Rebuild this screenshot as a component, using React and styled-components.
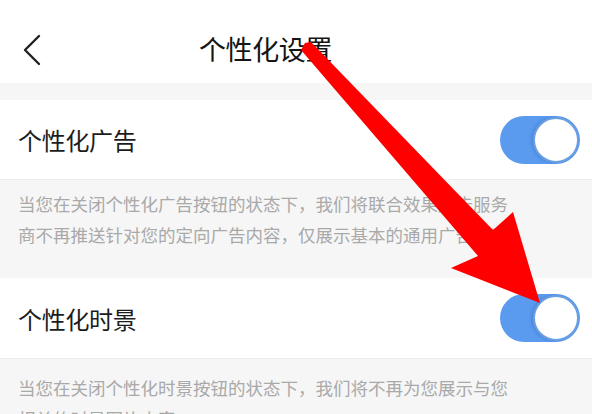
import React from 'react';
import styled, { createGlobalStyle } from 'styled-components';

const GlobalStyle = createGlobalStyle`
  html, body {
    margin: 0;
    padding: 0;
    background: #ffffff;
  }
  body {
    font-family: "Noto Sans CJK SC", "Noto Sans", sans-serif;
  }
`;

/** Page frame */
const Page = styled.div`
  position: relative;
  width: 592px;
  height: 414px;
  overflow: hidden;
  background: #f6f6f6;
`;

/** Header bar with back chevron and title */
const Header = styled.header`
  height: 83px;
  box-sizing: border-box;
  background: #ffffff;
  display: grid;
  grid-template-columns: 176px auto;
  align-items: center;
  padding: 16px 0 0 23px;
  margin-bottom: 17px;
`;

const BackIcon = styled.svg`
  width: 18px;
  height: 32px;
  display: block;
`;

const Title = styled.h1`
  margin: 0;
  font-size: 27px;
  font-weight: 400;
  color: #151515;
  letter-spacing: -0.4px;
  line-height: 1;
  padding-bottom: 2px;
`;

/** One setting row: label + switch */
const Row = styled.div`
  height: ${({ h }) => h}px;
  background: #ffffff;
  display: flex;
  align-items: center;
  justify-content: space-between;
  padding: 0 12px 0 18px;
`;

const Label = styled.span`
  font-size: 24px;
  color: #1c1c1c;
  letter-spacing: -0.3px;
`;

const Track = styled.div`
  width: 80px;
  height: 48px;
  border-radius: 24px;
  background: #5a9bf0;
  display: flex;
  align-items: center;
  justify-content: ${({ on }) => (on ? 'flex-end' : 'flex-start')};
  padding: 0 1px;
  box-sizing: border-box;
`;

const Knob = styled.div`
  width: 46px;
  height: 46px;
  border-radius: 50%;
  background: #ffffff;
  border: 2px solid #6a9fe2;
  box-sizing: border-box;
  box-shadow: -2px 0 3px rgba(40, 80, 140, 0.25);
`;

/** Grey explanation under each row */
const Description = styled.p`
  margin: 0;
  height: ${({ h }) => h}px;
  box-sizing: border-box;
  padding: ${({ pt }) => pt}px 80px 0 18px;
  font-size: 17.5px;
  line-height: 31px;
  color: #a9a9a9;
  background: #f6f6f6;
  border-top: 1px solid #ececec;
  overflow: hidden;
`;

const Arrow = styled.svg`
  position: absolute;
  left: 0;
  top: 0;
  width: 592px;
  height: 414px;
  pointer-events: none;
`;

const Switch = ({ on = true }) => (
  <Track on={on ? 1 : 0}>
    <Knob />
  </Track>
);

export default function App() {
  return (
    <>
      <GlobalStyle />
      <Page>
        <Header>
          <BackIcon viewBox="0 0 18 32">
            <polyline points="16,2 2,16 16,30" fill="none" stroke="#222" strokeWidth="2.4" strokeLinecap="round" strokeLinejoin="round" />
          </BackIcon>
          <Title>个性化设置</Title>
        </Header>

        <Row h={79}>
          <Label>个性化广告</Label>
          <Switch on />
        </Row>
        <Description h={99} pt={8}>
          当您在关闭个性化广告按钮的状态下，我们将联合效果广告服务商不再推送针对您的定向广告内容，仅展示基本的通用广告内容
        </Description>

        <Row h={80}>
          <Label>个性化时景</Label>
          <Switch on />
        </Row>
        <Description h={60} pt={13}>
          当您在关闭个性化时景按钮的状态下，我们将不再为您展示与您相关的时景图片内容
        </Description>

        <Arrow viewBox="0 0 592 414">
          <polygon
            points="305,43 311,42 493,230 513,212 540,303 451,268 478,256 301,50"
            fill="#ff0000"
            strokeLinejoin="round"
          />
        </Arrow>
      </Page>
    </>
  );
}
